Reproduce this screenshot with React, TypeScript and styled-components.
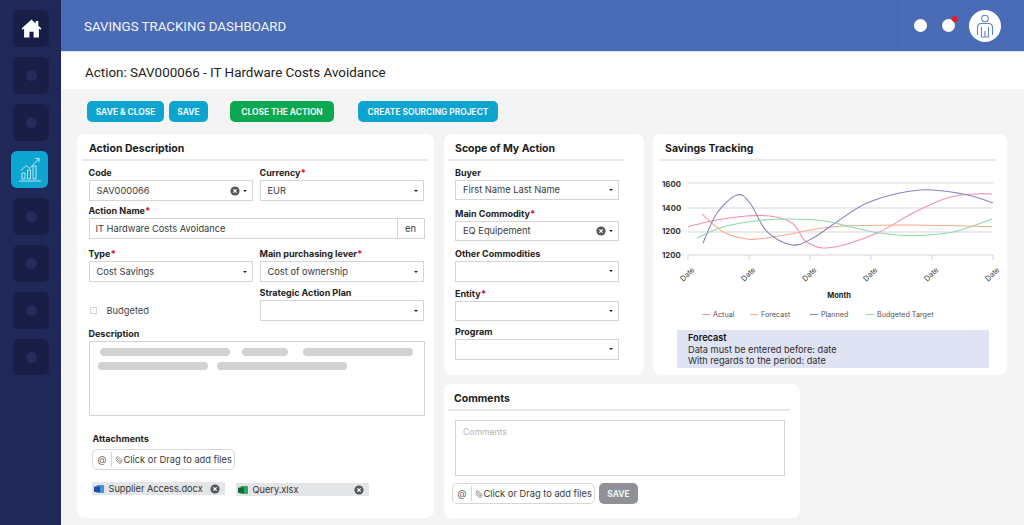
import { createGlobalStyle, styled } from "styled-components";
import { Paperclip } from "lucide-react";

const GlobalStyle = createGlobalStyle`
  html, body {
    margin: 0;
    padding: 0;
    height: 100%;
    overflow: hidden;
    background: #f4f4f4;
    font-family: "Inter", "Liberation Sans", sans-serif;
    color: #2b2b2b;
  }
  * { box-sizing: border-box; }
`;

const Shell = styled.div`
  display: flex;
  width: 1024px;
  height: 525px;
  overflow: hidden;
`;

const Sidebar = styled.nav`
  width: 61px;
  flex: none;
  background: #1f2859;
  padding: 10px 0 0 13px;
  display: flex;
  flex-direction: column;
  gap: 10.4px;
`;

const Tile = styled.div<{ $active?: boolean }>`
  width: ${(p) => (p.$active ? "37px" : "36px")};
  height: 36.6px;
  margin-left: ${(p) => (p.$active ? "-2px" : "0")};
  border-radius: 6px;
  background: ${(p) => (p.$active ? "#0ea5d0" : "#191e46")};
  display: flex;
  align-items: center;
  justify-content: center;
`;

const TileDot = styled.span`
  width: 11px;
  height: 11px;
  border-radius: 50%;
  background: #232b5f;
`;

const Main = styled.div`
  flex: 1;
  min-width: 0;
  display: flex;
  flex-direction: column;
`;

const Header = styled.header`
  height: 52px;
  flex: none;
  background: #4a6bb5;
  display: flex;
  align-items: center;
  padding-left: 23px;
  border-bottom: 1px solid #dbe4f3;
`;

const HeaderTitle = styled.h1`
  margin: 0 0 -1px;
  flex: 1;
  font: 400 13.3px "Roboto", sans-serif;
  color: #f4f6fb;
`;

const HeaderActions = styled.div`
  width: 127px;
  height: 51px;
  border-left: 1px solid #4465ad;
  display: flex;
  align-items: center;
  padding-left: 16px;
  gap: 15px;
`;

const HeaderDot = styled.span<{ $alert?: boolean }>`
  position: relative;
  width: 13px;
  height: 13px;
  border-radius: 50%;
  background: #fff;

  &::after {
    content: "";
    display: ${(p) => (p.$alert ? "block" : "none")};
    position: absolute;
    top: -3px;
    right: -3px;
    width: 6px;
    height: 6px;
    border-radius: 50%;
    background: #ee1c25;
  }
`;

const Avatar = styled.div`
  width: 32px;
  height: 32px;
  margin-left: -1px;
  border-radius: 50%;
  background: #fff;
  display: flex;
  align-items: center;
  justify-content: center;
`;

const TitleBar = styled.div`
  height: 37px;
  flex: none;
  background: #fff;
  display: flex;
  align-items: center;
  padding: 4px 0 0 24px;
  font: 400 13.4px "Roboto", sans-serif;
  color: #222;
`;

const Toolbar = styled.div`
  display: flex;
  padding: 12px 0 0 26px;
  height: 45px;
  flex: none;
`;

const ActionButton = styled.button<{ $tone?: "blue" | "green" | "grey"; $left?: number; $width: number }>`
  width: ${(p) => p.$width}px;
  height: 21px;
  margin-left: ${(p) => p.$left ?? 0}px;
  border: 0;
  border-radius: 5px;
  padding: 0;
  font: 700 8.4px "Inter", sans-serif;
  color: #eef6fa;
  background: ${(p) =>
    p.$tone === "green" ? "#0aa850" : p.$tone === "grey" ? "#8f9196" : "#0da5cf"};
`;

const Content = styled.div`
  display: flex;
  gap: 10px;
  padding-left: 16px;
`;

const SideColumn = styled.div`
  display: flex;
  flex-direction: column;
  gap: 9px;
`;

const TopRow = styled.div`
  display: flex;
  gap: 9px;
`;

const Card = styled.section<{ $width: number; $height: number }>`
  width: ${(p) => p.$width}px;
  height: ${(p) => p.$height}px;
  background: #fff;
  border-radius: 8px;
  flex: none;
`;

const CardHead = styled.div<{ $rule: number; $inset?: number; $pad?: number }>`
  height: 27px;
  margin: 0 ${(p) => p.$rule}px 0 ${(p) => p.$inset ?? 5}px;
  padding: 3px 0 0 ${(p) => p.$pad ?? 7}px;
  display: flex;
  align-items: center;
  border-bottom: 2px solid #e8e8e8;
  font-size: 10.5px;
  font-weight: 700;
  color: #1b1b1b;
`;

const CardBody = styled.div<{ $left: number; $right: number; $top?: number }>`
  padding: ${(p) => p.$top ?? 5}px ${(p) => p.$right}px 0 ${(p) => p.$left}px;
`;

const FormRow = styled.div<{ $top?: number }>`
  display: grid;
  grid-template-columns: 164px 164px;
  column-gap: 7px;
  margin-top: ${(p) => p.$top ?? 0}px;
  align-items: end;
`;

const Field = styled.div<{ $top?: number }>`
  margin-top: ${(p) => p.$top ?? 0}px;
`;

const Label = styled.div`
  height: 14px;
  line-height: 14px;
  font-size: 9px;
  font-weight: 700;
  color: #222;

  & b {
    color: #e0202c;
  }
`;

const Select = styled.div<{ $h?: number }>`
  height: ${(p) => p.$h ?? 21}px;
  border: 1px solid #d4d4d4;
  padding: 0 5px 0 7px;
  display: flex;
  align-items: center;
  font-size: 9.3px;
  color: #3a3a3a;
`;

const SelectText = styled.span`
  flex: 1;
`;

const Caret = styled.span`
  margin-left: 3px;
  width: 0;
  height: 0;
  border-left: 2px solid transparent;
  border-right: 2px solid transparent;
  border-top: 2px solid #222;
`;

const NameInput = styled.div`
  height: 21px;
  border: 1px solid #d4d4d4;
  display: flex;
  align-items: center;
  padding-left: 6px;
  font-size: 9.3px;
  color: #3a3a3a;
`;

const NameAddon = styled.span`
  width: 27px;
  height: 100%;
  border-left: 1px solid #d4d4d4;
  display: flex;
  align-items: center;
  justify-content: center;
  margin-left: auto;
`;

const CheckRow = styled.div`
  height: 21px;
  display: flex;
  align-items: center;
  gap: 10px;
  padding-left: 1px;
  font-size: 9.3px;
  color: #444;
`;

const CheckBox = styled.span`
  width: 7px;
  height: 7px;
  border: 1px solid #d6d6d6;
`;

const TextBox = styled.div<{ $h: number }>`
  height: ${(p) => p.$h}px;
  border: 1px solid #d4d4d4;
`;

const SkeletonBox = styled(TextBox)`
  padding: 6px 0 0 8px;
  display: flex;
  flex-direction: column;
  gap: 6px;
`;

const SkeletonLine = styled.div`
  display: flex;
`;

const SkeletonBar = styled.span<{ $width: number; $left?: number }>`
  width: ${(p) => p.$width}px;
  height: 8px;
  margin-left: ${(p) => p.$left ?? 0}px;
  border-radius: 4px;
  background: #d2d2d2;
`;

const AttachLabel = styled(Label)`
  margin: 16px 0 3px 4px;
`;

const Upload = styled.div<{ $left?: number }>`
  width: 143px;
  height: 21px;
  margin-left: ${(p) => p.$left ?? 0}px;
  border: 1px solid #d6d6d6;
  border-radius: 5px;
  display: flex;
  align-items: center;
  font-size: 9.3px;
  color: #3a3a3a;
  flex: none;
`;

const UploadAt = styled.span`
  width: 19px;
  height: 15px;
  flex: none;
  border-right: 1px solid #d6d6d6;
  display: flex;
  align-items: center;
  justify-content: center;
  color: #666;
`;

const UploadText = styled.span`
  display: flex;
  align-items: center;
  gap: 0.5px;
  padding-left: 3px;
  white-space: nowrap;
`;

const ClipIcon = styled(Paperclip)`
  transform: scaleX(-1);
`;

const ChipRow = styled.div`
  display: flex;
  align-items: flex-start;
  gap: 11px;
  margin: 12px 0 0 3px;
`;

const Chip = styled.div<{ $width: number; $top?: number }>`
  width: ${(p) => p.$width}px;
  height: 13px;
  margin-top: ${(p) => p.$top ?? 0}px;
  background: #e4e5e7;
  display: flex;
  align-items: center;
  padding: 0 5px 0 2px;
  gap: 5px;
  font-size: 9.2px;
  color: #333;
`;

const ChipName = styled.span`
  flex: 1;
`;

const ChartWrap = styled.svg`
  display: block;
  width: 354px;
  height: 169px;
`;

const ForecastBox = styled.div`
  width: 312px;
  height: 38px;
  margin: 0 0 0 24px;
  padding: 2px 0 0 11px;
  background: #dfe3f3;
  font-size: 9.2px;
  line-height: 11.5px;
  color: #2e2e2e;

  & strong {
    display: block;
    color: #111;
    font-weight: 600;
  }
`;

const CommentBox = styled(TextBox)`
  padding: 6px 7px;
  font-size: 8.6px;
  color: #b5b5b5;
`;

const CommentActions = styled.div`
  display: flex;
  align-items: flex-start;
  gap: 4px;
  margin-top: 7px;
`;

const ClearIcon = () => (
  <svg width="10" height="10" viewBox="0 0 10 10" aria-hidden="true">
    <circle cx="5" cy="5" r="4.6" fill="#55585c" />
    <path d="M3.4 3.4l3.2 3.2M6.6 3.4L3.4 6.6" stroke="#fff" strokeWidth="1.2" />
  </svg>
);

const HomeIcon = () => (
  <svg width="21" height="21" viewBox="0 0 21 21" aria-hidden="true">
    <path fill="#fff" d="M10.5 1.6L.6 10.6l1 1.1 1.5-1.2v9h5.3v-5.8h4.2v5.8h5.3v-9l1.5 1.2 1-1.1-3.1-2.8V3h-2.6v2.5z" />
  </svg>
);

const TrendIcon = () => (
  <svg width="24" height="26" viewBox="0 0 24 26" fill="none" stroke="#e8f6fb" strokeWidth="0.8" aria-hidden="true">
    <path d="M1 25h22" />
    <path d="M4 23v-6h3v6zM9.5 23v-9h3v9zM15 23V10h3v13z" />
    <path d="M2.5 15L8 9.5l3.5 3L21 2.5" />
    <path d="M17.5 2.5H21v3.5" />
  </svg>
);

const PersonIcon = () => (
  <svg width="22" height="26" viewBox="0 0 22 26" fill="none" stroke="#5f83c2" strokeWidth="1.1" aria-hidden="true">
    <circle cx="11" cy="5.5" r="3.3" />
    <path d="M3.5 22v-8a3.5 3.5 0 0 1 3.5-3.5h8a3.5 3.5 0 0 1 3.5 3.5v8" />
    <path d="M7.5 14v10h7V14M11 18v6" />
  </svg>
);

const WordIcon = () => (
  <svg width="10" height="10" viewBox="0 0 10 10" aria-hidden="true">
    <rect x="2.5" y="1" width="7.5" height="8" rx="0.8" fill="#4a8fdc" />
    <rect x="0" y="2.5" width="6" height="5.5" rx="0.6" fill="#1d4fa3" />
  </svg>
);

const ExcelIcon = () => (
  <svg width="10" height="10" viewBox="0 0 10 10" aria-hidden="true">
    <rect x="2.5" y="1" width="7.5" height="8" rx="0.8" fill="#2fa562" />
    <rect x="0" y="2.5" width="6" height="5.5" rx="0.6" fill="#116c3a" />
  </svg>
);

type Pt = [number, number];

// Catmull-Rom through the sampled points
const smooth = (pts: Pt[]) => {
  let d = `M${pts[0][0]} ${pts[0][1]}`;
  for (let i = 0; i < pts.length - 1; i++) {
    const p0 = pts[Math.max(i - 1, 0)];
    const p1 = pts[i];
    const p2 = pts[i + 1];
    const p3 = pts[Math.min(i + 2, pts.length - 1)];
    const c1x = p1[0] + (p2[0] - p0[0]) / 6;
    const c1y = p1[1] + (p2[1] - p0[1]) / 6;
    const c2x = p2[0] - (p3[0] - p1[0]) / 6;
    const c2y = p2[1] - (p3[1] - p1[1]) / 6;
    d += ` C${c1x} ${c1y} ${c2x} ${c2y} ${p2[0]} ${p2[1]}`;
  }
  return d;
};

const pink = "#f48fb4";
const orange = "#f7a988";
const violet = "#8683c4";
const green = "#8fd8ab";

const series: { color: string; pts: Pt[] }[] = [
  {
    color: pink,
    pts: [[688, 226.7], [713, 220.7], [747, 216], [770, 216], [790, 221.7], [798, 230], [805, 240.7], [823, 248], [847, 244], [880, 231.7], [913, 213], [947, 198], [973, 194], [992, 194]],
  },
  {
    color: orange,
    pts: [[702, 214], [723, 231.7], [747, 239], [767, 238], [790, 234], [823, 228], [853, 225.7], [913, 225], [992, 226.7]],
  },
  {
    color: violet,
    pts: [[703, 243], [717, 213], [737, 195], [750, 203], [767, 231.7], [792, 245], [813, 238], [837, 221.7], [870, 201.7], [920, 190], [963, 194], [993, 202.7]],
  },
  {
    color: green,
    pts: [[697, 238], [723, 227], [757, 220.7], [790, 219], [823, 220.7], [850, 226.7], [880, 233], [913, 235.7], [953, 232], [992, 219]],
  },
];

const gridY = [183, 208, 232];
const yLabels: [string, number][] = [["1600", 184], ["1400", 208], ["1200", 231], ["1200", 255]];
const xTicks = [688, 749, 810, 871, 932, 993];
const legend: [string, string, number][] = [
  ["Actual", pink, 702],
  ["Forecast", orange, 750],
  ["Planned", violet, 810],
  ["Budgeted Target", green, 866],
];

const SavingsChart = () => (
  <ChartWrap viewBox="653 161 354 169" fontFamily="Inter, sans-serif">
    {gridY.map((y) => (
      <line key={y} x1={688} x2={993} y1={y} y2={y} stroke="#e3e3e8" strokeWidth="1.5" />
    ))}
    <line x1={688} x2={993} y1={255} y2={255} stroke="#d5d3de" />
    {xTicks.map((x) => (
      <line key={x} x1={x} x2={x} y1={255} y2={260} stroke="#d5d3de" />
    ))}
    {series.map((s) => (
      <path key={s.color} d={smooth(s.pts)} fill="none" stroke={s.color} strokeWidth="1.1" />
    ))}
    {yLabels.map(([t, y]) => (
      <text key={y} x={662} y={y + 3} fontSize="7.8" fontWeight="700" fill="#333">
        {t}
      </text>
    ))}
    {xTicks.map((x) => (
      <text
        key={x}
        x={x - 1}
        y={277}
        fontSize="7.6"
        fill="#444"
        textAnchor="middle"
        transform={`rotate(-45 ${x - 1} 274)`}
      >
        Date
      </text>
    ))}
    <text x={839} y={298} fontSize="7.5" fontWeight="700" fill="#222" textAnchor="middle">
      Month
    </text>
    {legend.map(([t, c, x]) => (
      <g key={t}>
        <line x1={x} x2={x + 8} y1={314.5} y2={314.5} stroke={c} />
        <text x={x + 11} y={317} fontSize="7.2" fill="#555">
          {t}
        </text>
      </g>
    ))}
  </ChartWrap>
);

const UploadControl = ({ left }: { left?: number }) => (
  <Upload $left={left}>
    <UploadAt>@</UploadAt>
    <UploadText>
      <ClipIcon size={8} color="#666" />
      Click or Drag to add files
    </UploadText>
  </Upload>
);

const PickField = ({ label, req, value, clear, top, h }: { label: string; req?: boolean; value?: string; clear?: boolean; top?: number; h?: number }) => (
  <Field $top={top}>
    <Label>
      {label}
      {req && <b>*</b>}
    </Label>
    <Select $h={h}>
      <SelectText>{value}</SelectText>
      {clear && <ClearIcon />}
      <Caret />
    </Select>
  </Field>
);

export default function App() {
  return (
    <Shell>
      <GlobalStyle />
      <Sidebar>
        <Tile>
          <HomeIcon />
        </Tile>
        <Tile>
          <TileDot />
        </Tile>
        <Tile>
          <TileDot />
        </Tile>
        <Tile $active>
          <TrendIcon />
        </Tile>
        <Tile>
          <TileDot />
        </Tile>
        <Tile>
          <TileDot />
        </Tile>
        <Tile>
          <TileDot />
        </Tile>
        <Tile>
          <TileDot />
        </Tile>
      </Sidebar>
      <Main>
        <Header>
          <HeaderTitle>SAVINGS TRACKING DASHBOARD</HeaderTitle>
          <HeaderActions>
            <HeaderDot />
            <HeaderDot $alert />
            <Avatar>
              <PersonIcon />
            </Avatar>
          </HeaderActions>
        </Header>
        <TitleBar>Action: SAV000066 - IT Hardware Costs Avoidance</TitleBar>
        <Toolbar>
          <ActionButton $width={77}>SAVE &amp; CLOSE</ActionButton>
          <ActionButton $width={39} $left={5}>SAVE</ActionButton>
          <ActionButton $width={104} $left={22} $tone="green">CLOSE THE ACTION</ActionButton>
          <ActionButton $width={140} $left={24}>CREATE SOURCING PROJECT</ActionButton>
        </Toolbar>
        <Content>
          <Card $width={357} $height={384}>
            <CardHead $rule={6}>Action Description</CardHead>
            <CardBody $left={11.5} $right={9.5}>
              <FormRow>
                <PickField label="Code" value="SAV000066" clear />
                <PickField label="Currency" req value="EUR" />
              </FormRow>
              <Field $top={3}>
                <Label>
                  Action Name<b>*</b>
                </Label>
                <NameInput>
                  IT Hardware Costs Avoidance
                  <NameAddon>en</NameAddon>
                </NameInput>
              </Field>
              <FormRow $top={8}>
                <PickField label="Type" req value="Cost Savings" />
                <PickField label="Main purchasing lever" req value="Cost of ownership" />
              </FormRow>
              <FormRow $top={4}>
                <CheckRow>
                  <CheckBox />
                  Budgeted
                </CheckRow>
                <PickField label="Strategic Action Plan" />
              </FormRow>
              <Field $top={6}>
                <Label>Description</Label>
                <SkeletonBox $h={75}>
                  <SkeletonLine>
                    <SkeletonBar $width={130} $left={2} />
                    <SkeletonBar $width={46} $left={12} />
                    <SkeletonBar $width={110} $left={15} />
                  </SkeletonLine>
                  <SkeletonLine>
                    <SkeletonBar $width={110} />
                    <SkeletonBar $width={130} $left={9} />
                  </SkeletonLine>
                </SkeletonBox>
              </Field>
              <AttachLabel>Attachments</AttachLabel>
              <UploadControl left={3.5} />
              <ChipRow>
                <Chip $width={133}>
                  <WordIcon />
                  <ChipName>Supplier Access.docx</ChipName>
                  <ClearIcon />
                </Chip>
                <Chip $width={133} $top={1}>
                  <ExcelIcon />
                  <ChipName>Query.xlsx</ChipName>
                  <ClearIcon />
                </Chip>
              </ChipRow>
            </CardBody>
          </Card>
          <SideColumn>
            <TopRow>
              <Card $width={200} $height={241}>
                <CardHead $rule={19} $inset={4}>Scope of My Action</CardHead>
                <CardBody $left={11} $right={25} $top={4.5}>
                  <PickField label="Buyer" value="First Name Last Name" h={20.5} />
                  <PickField label="Main Commodity" req value="EQ Equipement" clear top={6.5} h={20.5} />
                  <PickField label="Other Commodities" top={6} h={20.5} />
                  <PickField label="Entity" req top={5} h={20.5} />
                  <PickField label="Program" top={4} h={20.5} />
                </CardBody>
              </Card>
              <Card $width={354} $height={241}>
                <CardHead $rule={12} $inset={6} $pad={6}>Savings Tracking</CardHead>
                <SavingsChart />
                <ForecastBox>
                  <strong>Forecast</strong>
                  Data must be entered before: date
                  <br />
                  With regards to the period: date
                </ForecastBox>
              </Card>
            </TopRow>
            <Card $width={356} $height={134}>
              <CardHead $rule={10} $inset={4} $pad={6}>Comments</CardHead>
              <CardBody $left={11} $right={15} $top={4}>
                <Field $top={5}>
                  <CommentBox $h={56}>Comments</CommentBox>
                </Field>
                <CommentActions>
                  <UploadControl left={-3} />
                  <ActionButton $width={39} $tone="grey">SAVE</ActionButton>
                </CommentActions>
              </CardBody>
            </Card>
          </SideColumn>
        </Content>
      </Main>
    </Shell>
  );
}
